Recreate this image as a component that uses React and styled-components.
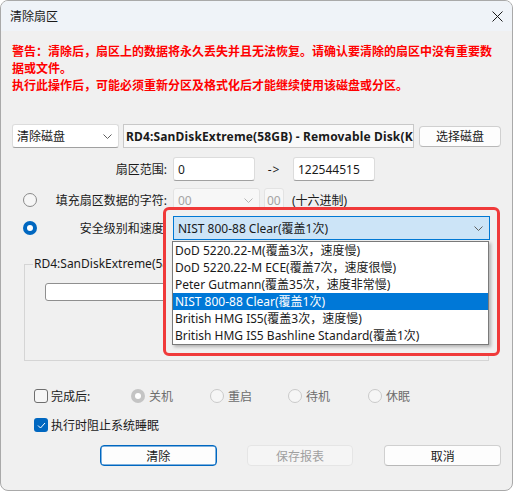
import React from "react";
import styled, { createGlobalStyle, css } from "styled-components";

const GlobalStyle = createGlobalStyle`
  html, body { margin: 0; padding: 0; background: #ffffff; }
  body {
    font-family: "Noto Sans", "Noto Sans CJK SC", sans-serif;
    font-size: 12px;
    color: #1a1a1a;
  }
  * { box-sizing: border-box; }
`;

const Window = styled.div`
  width: 513px;
  height: 491px;
  border: 1px solid #a9a9a9;
  border-radius: 8px;
  background: #f0f0f0;
  overflow: hidden;
  display: flex;
  flex-direction: column;
`;

const TitleBar = styled.div`
  height: 30px;
  flex: none;
  background: #eff3f8;
  display: flex;
  align-items: center;
  justify-content: space-between;
  padding: 0 9px 0 9px;
  font-size: 12px;
  color: #1a1a1a;
`;

const CloseButton = styled.div`
  width: 12px;
  height: 12px;
  display: flex;
  align-items: center;
  justify-content: center;
`;

const Body = styled.div`
  position: relative;
  flex: 1;
  padding: 11px 11px 0 11px;
  display: flex;
  flex-direction: column;
`;

const Warning = styled.div`
  color: #ff0000;
  font-family: "Noto Sans CJK SC", sans-serif;
  font-weight: 700;
  font-size: 12px;
  line-height: 17px;
  white-space: nowrap;
`;

const Row = styled.div`
  display: flex;
  align-items: center;
  height: ${(p) => p.$h || 24}px;
  margin-top: ${(p) => p.$mt || 0}px;
`;

const fieldBase = css`
  height: 24px;
  background: #ffffff;
  border: 1px solid #dcdcdc;
  border-bottom-color: #a0a0a0;
  border-radius: 3px;
  display: flex;
  align-items: center;
  padding: 0 4px;
  white-space: nowrap;
  overflow: hidden;
`;

const Combo = styled.div`
  ${fieldBase}
  position: relative;
  width: ${(p) => p.$w}px;
  justify-content: space-between;
  padding: 0 6px 0 4px;
  ${(p) =>
    p.$disabled &&
    css`
      background: #f7f7f7;
      border-color: #e3e3e3;
      color: #a3a3a3;
    `}
  ${(p) =>
    p.$open &&
    css`
      z-index: 3;
      background: #cce4f7;
      border: 1px solid #0078d4;
      border-radius: 0;
    `}
`;

const Field = styled.div`
  ${fieldBase}
  width: ${(p) => p.$w}px;
  ${(p) =>
    p.$disabled &&
    css`
      background: #f7f7f7;
      border-color: #e3e3e3;
      color: #a3a3a3;
      margin-left: 4px;
      padding: 0 2px;
    `}
`;

const DiskName = styled.div`
  height: 24px;
  width: 291px;
  margin-left: 4px;
  border: 1px solid #c8c8c8;
  background: #f9f9f9;
  font-weight: 700;
  display: flex;
  align-items: center;
  padding-left: 2px;
  white-space: nowrap;
  overflow: hidden;
  letter-spacing: 0.15px;
`;

const Button = styled.button`
  font-family: inherit;
  font-size: 12px;
  height: 21px;
  width: ${(p) => p.$w}px;
  margin-left: ${(p) => p.$ml || 0}px;
  background: #fdfdfd;
  border: 1px solid #d0d0d0;
  border-bottom-color: #b8b8b8;
  border-radius: 4px;
  color: #1a1a1a;
  padding: 0;
  display: flex;
  align-items: center;
  justify-content: center;
  ${(p) =>
    p.$primary &&
    css`
      border: 1px solid #0067c0;
      box-shadow: inset 0 0 0 0.5px #0067c0;
    `}
  ${(p) =>
    p.$disabled &&
    css`
      background: #f5f5f5;
      border-color: #e5e5e5;
      color: #a0a0a0;
    `}
`;

const RadioCell = styled.div`
  width: 42px;
  flex: none;
  display: flex;
  padding-left: 11px;
`;

const Label = styled.div`
  width: 113px;
  flex: none;
  text-align: right;
  white-space: nowrap;
  margin-right: 6px;
`;

const RadioDot = styled.span`
  width: 14px;
  height: 14px;
  border-radius: 50%;
  flex: none;
  display: inline-flex;
  align-items: center;
  justify-content: center;
  ${(p) =>
    p.$checked
      ? css`
          background: ${p.$disabled ? "#c4c4c4" : "#0067c0"};
          &::after {
            content: "";
            width: 6px;
            height: 6px;
            border-radius: 50%;
            background: #ffffff;
          }
        `
      : css`
          background: #f6f6f6;
          border: 1px solid ${p.$disabled ? "#cacaca" : "#8a8a8a"};
        `}
`;

const Chevron = ({ color = "#5f5f5f" }) => (
  <svg width="9" height="5" viewBox="0 0 9 5">
    <path d="M0.5 0.5 L4.5 4.5 L8.5 0.5" fill="none" stroke={color} strokeWidth="1" />
  </svg>
);

const Arrow = styled.span`
  width: 38px;
  text-align: center;
  flex: none;
  letter-spacing: 1px;
`;

const Hint = styled.span`
  margin-left: 8px;
  white-space: nowrap;
`;

/* red highlight frame drawn around the open speed combo */
const Annotation = styled.div`
  position: absolute;
  left: 162px;
  top: 176px;
  width: 337px;
  height: 149px;
  border: 3px solid #f03a3a;
  border-radius: 6px;
  background: #f0f0f0;
  z-index: 2;
`;

const DropList = styled.div`
  position: absolute;
  left: 171px;
  top: 210px;
  width: 317px;
  z-index: 4;
  background: #ffffff;
  border: 1px solid #7a7a7a;
  box-shadow: 2px 2px 3px rgba(0, 0, 0, 0.25);
`;

const DropItem = styled.div`
  height: 17px;
  line-height: 17px;
  padding-left: 2px;
  white-space: nowrap;
  ${(p) =>
    p.$active &&
    css`
      background: #0078d7;
      color: #ffffff;
    `}
`;

const Group = styled.fieldset`
  margin: 16px 0 0 12px;
  width: 465px;
  height: 105px;
  border: 1px solid #d5d5d5;
  border-radius: 0;
  padding: 11px 0 0 20px;
  position: relative;
`;

const GroupLegend = styled.legend`
  padding: 0 1px;
  margin-left: -12px;
  max-width: 130px;
  overflow: hidden;
  white-space: nowrap;
  font-size: 12px;
  line-height: 16px;
`;

const Progress = styled.div`
  width: 422px;
  height: 18px;
  background: #ffffff;
  border: 1px solid #8f8f8f;
  border-radius: 3px;
`;

const OptionRow = styled.div`
  display: flex;
  align-items: center;
  height: 18px;
  margin-top: ${(p) => p.$mt}px;
  padding-left: 22px;
`;

const Check = styled.span`
  width: 14px;
  height: 14px;
  flex: none;
  border-radius: 3px;
  display: inline-flex;
  align-items: center;
  justify-content: center;
  ${(p) =>
    p.$checked
      ? css`
          background: #0067c0;
        `
      : css`
          border: 1px solid #6e6e6e;
          background: #f6f6f6;
        `}
`;

const OptionText = styled.span`
  margin-left: 3px;
  white-space: nowrap;
  width: ${(p) => (p.$w ? `${p.$w}px` : "auto")};
  flex: none;
`;

const PowerChoice = styled.label`
  display: inline-flex;
  align-items: center;
  width: ${(p) => p.$w}px;
  flex: none;
  color: #6d6d6d;
  span + span {
    margin-left: 4px;
  }
`;

const ButtonBar = styled.div`
  display: flex;
  align-items: center;
  margin-top: 11px;
  padding-left: 88px;
`;

const listItems = [
  "DoD 5220.22-M(覆盖3次，速度慢)",
  "DoD 5220.22-M ECE(覆盖7次，速度很慢)",
  "Peter Gutmann(覆盖35次，速度非常慢)",
  "NIST 800-88 Clear(覆盖1次)",
  "British HMG IS5(覆盖3次，速度慢)",
  "British HMG IS5 Bashline Standard(覆盖1次)",
];

export default function App() {
  return (
    <>
      <GlobalStyle />
      <Window>
        <TitleBar>
          <span>清除扇区</span>
          <CloseButton>
            <svg width="11" height="11" viewBox="0 0 11 11">
              <path d="M0.5 0.5 L10.5 10.5 M10.5 0.5 L0.5 10.5" stroke="#1a1a1a" strokeWidth="1" />
            </svg>
          </CloseButton>
        </TitleBar>
        <Body>
          <Warning>
            警告：清除后，扇区上的数据将永久丢失并且无法恢复。请确认要清除的扇区中没有重要数
            <br />
            据或文件。
            <br />
            执行此操作后，可能必须重新分区及格式化后才能继续使用该磁盘或分区。
          </Warning>

          <Row $mt={31}>
            <Combo $w={107}>
              <span>清除磁盘</span>
              <Chevron />
            </Combo>
            <DiskName>RD4:SanDiskExtreme(58GB) - Removable Disk(K:)</DiskName>
            <Button $w={82} $ml={5}>选择磁盘</Button>
          </Row>

          <Row $mt={9}>
            <RadioCell />
            <Label>扇区范围:</Label>
            <Field $w={82}>0</Field>
            <Arrow>-&gt;</Arrow>
            <Field $w={82}>122544515</Field>
          </Row>

          <Row $mt={7}>
            <RadioCell>
              <RadioDot />
            </RadioCell>
            <Label>填充扇区数据的字符:</Label>
            <Combo $w={87} $disabled>
              <span>00</span>
              <Chevron color="#b5b5b5" />
            </Combo>
            <Field $w={20} $disabled>
              00
            </Field>
            <Hint>(十六进制)</Hint>
          </Row>

          <Row $mt={4}>
            <RadioCell>
              <RadioDot $checked />
            </RadioCell>
            <Label>安全级别和速度:</Label>
            <Combo $w={317} $open>
              <span>NIST 800-88 Clear(覆盖1次)</span>
              <Chevron />
            </Combo>
          </Row>

          <Annotation />
          <DropList>
            {listItems.map((t, i) => (
              <DropItem key={t} $active={i === 3}>
                {t}
              </DropItem>
            ))}
          </DropList>

          <Group>
            <GroupLegend>RD4:SanDiskExtreme(58GB) - Removable Disk(K:)</GroupLegend>
            <Progress />
          </Group>

          <OptionRow $mt={26}>
            <Check />
            <OptionText $w={80}>完成后:</OptionText>
            <PowerChoice $w={79}>
              <RadioDot $checked $disabled />
              <span>关机</span>
            </PowerChoice>
            <PowerChoice $w={78}>
              <RadioDot $disabled />
              <span>重启</span>
            </PowerChoice>
            <PowerChoice $w={80}>
              <RadioDot $disabled />
              <span>待机</span>
            </PowerChoice>
            <PowerChoice $w={80}>
              <RadioDot $disabled />
              <span>休眠</span>
            </PowerChoice>
          </OptionRow>

          <OptionRow $mt={11}>
            <Check $checked>
              <svg width="9" height="7" viewBox="0 0 9 7">
                <path d="M1 3.5 L3.5 6 L8 1" fill="none" stroke="#ffffff" strokeWidth="1" />
              </svg>
            </Check>
            <OptionText>执行时阻止系统睡眠</OptionText>
          </OptionRow>

          <ButtonBar>
            <Button $w={117} $primary>清除</Button>
            <Button $w={107} $ml={30} $disabled>保存报表</Button>
            <Button $w={117} $ml={31}>取消</Button>
          </ButtonBar>
        </Body>
      </Window>
    </>
  );
}
